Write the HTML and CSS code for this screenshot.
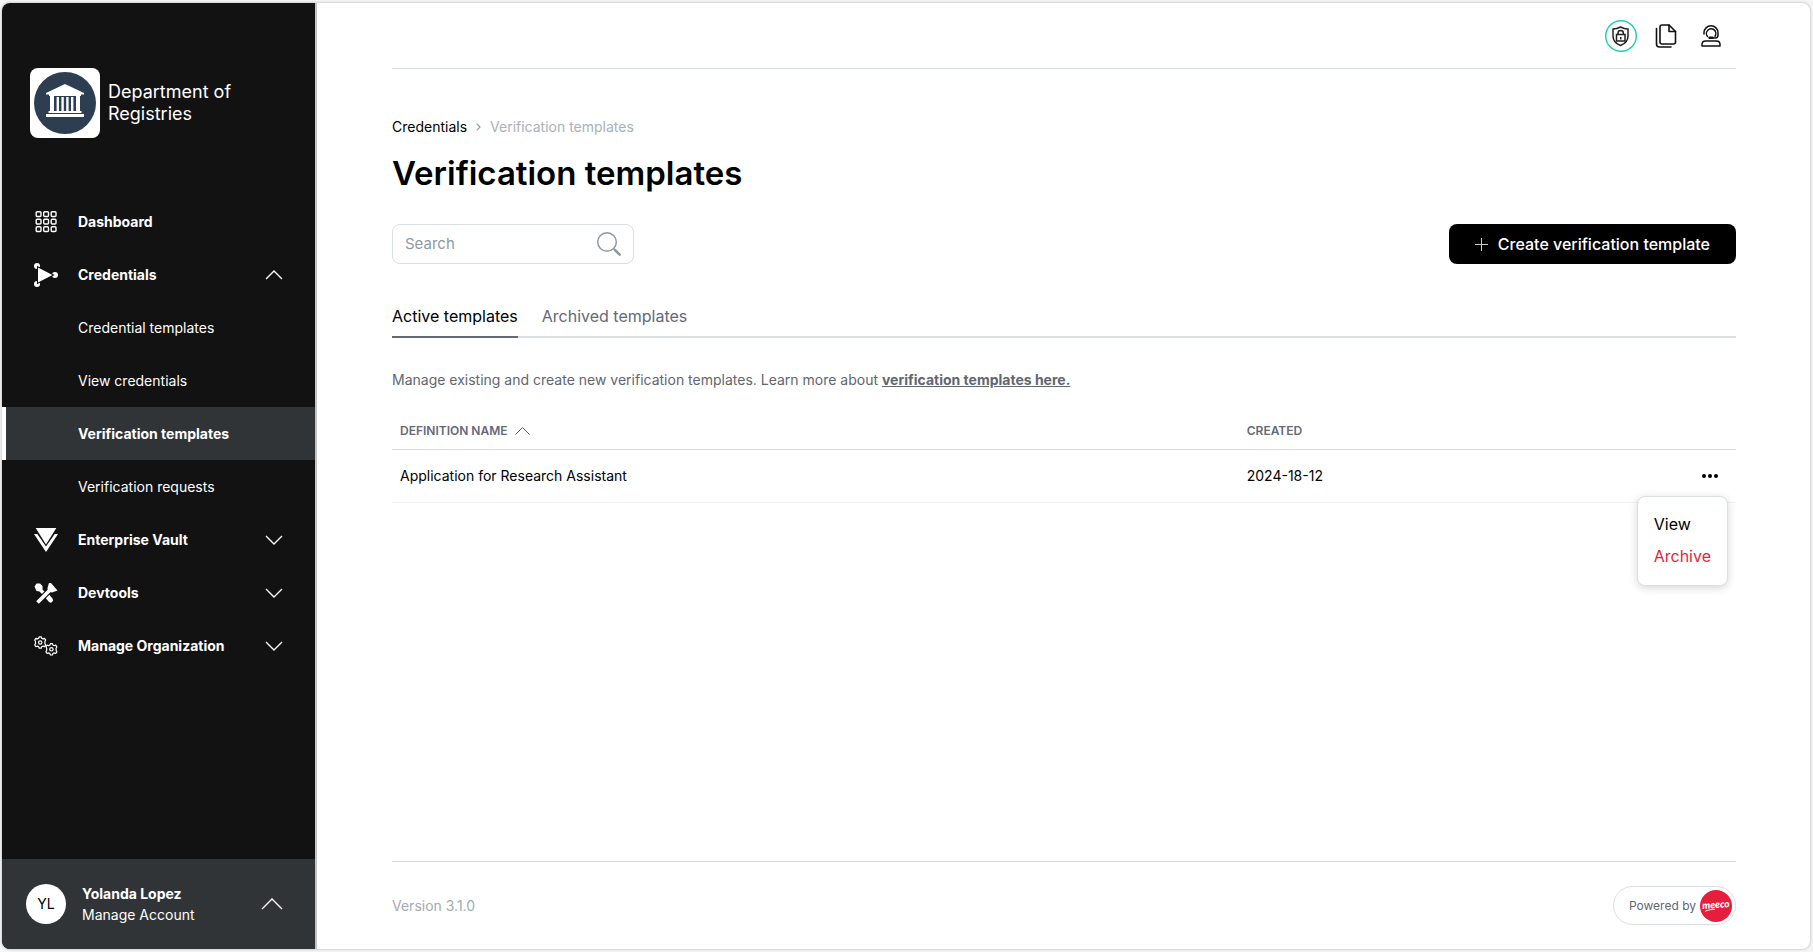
FILE: index.html
```html
<!DOCTYPE html>
<html lang="en">
<head>
<meta charset="utf-8">
<title>Verification templates</title>
<meta name="viewport" content="width=device-width, initial-scale=1">
<link rel="stylesheet" href="styles.css">
</head>
<body>
<div class="app">
  <aside class="sidebar">
    <div class="brand">
      <svg class="brand-logo" viewBox="0 0 70 70" aria-hidden="true">
        <rect width="70" height="70" rx="8" fill="#fff"/>
        <circle cx="35" cy="35" r="31" fill="#2c3e50"/>
        <g fill="#fff">
          <path d="M35 16 54 25v1.500H16V25z"/>
          <path d="M19 26h32v2H19z"/>
          <path d="M20 28h4v16h-4zM26.600 29h2.400v14h-2.400zM31.400 29h2.400v14h-2.400zM36.200 29h2.400v14h-2.400zM41 29h2.400v14H41zM46 28h4v16h-4z"/>
          <path d="M18.500 43h33v2h-33zM16 46h38v3H16z"/>
        </g>
      </svg>
      <span class="brand-name">Department of Registries</span>
    </div>
    <nav class="nav" aria-label="Main">
      <a class="nav-item" href="#">
        <svg class="nav-icon" viewBox="0 0 24 24" fill="none" stroke="#fff" stroke-width="1.4">
          <rect x="2.2" y="1.7" width="4.8" height="4.8" rx="1"/><rect x="9.7" y="1.7" width="4.8" height="4.8" rx="1"/><rect x="17.2" y="1.7" width="4.8" height="4.8" rx="1"/>
          <rect x="2.2" y="9.2" width="4.8" height="4.8" rx="1"/><rect x="9.7" y="9.2" width="4.8" height="4.8" rx="1"/><rect x="17.2" y="9.2" width="4.8" height="4.8" rx="1"/>
          <rect x="2.2" y="16.7" width="4.8" height="4.8" rx="1"/><rect x="9.7" y="16.7" width="4.8" height="4.8" rx="1"/><rect x="17.2" y="16.7" width="4.8" height="4.8" rx="1"/>
        </svg>
        <span>Dashboard</span>
      </a>
      <button class="nav-item" type="button" aria-expanded="true">
        <svg class="nav-icon" viewBox="0 0 24 24">
          <g fill="#fff"><circle cx="3" cy="3" r="3"/><circle cx="3" cy="21" r="3"/><circle cx="21" cy="12" r="3"/></g>
          <path d="M4 4.5v15L18.5 12z" fill="#fff" stroke="#121212" stroke-width="2" paint-order="stroke"/>
        </svg>
        <span>Credentials</span>
        <svg class="nav-chevron" viewBox="0 0 18 10"><path d="M1 9l8-8 8 8"/></svg>
      </button>
      <a class="nav-item nav-sub" href="#">Credential templates</a>
      <a class="nav-item nav-sub" href="#">View credentials</a>
      <a class="nav-item nav-sub nav-current" href="#" aria-current="page">Verification templates</a>
      <a class="nav-item nav-sub" href="#">Verification requests</a>
      <button class="nav-item" type="button" aria-expanded="false">
        <svg class="nav-icon" viewBox="0 0 24 24" fill="#fff"><path d="M1.7 0h20.6L12 16.500z"/><path d="M0 6h3.300L12 18.600 20.700 6H24L12 24z"/></svg>
        <span>Enterprise Vault</span>
        <svg class="nav-chevron" viewBox="0 0 18 10"><path d="M1 1l8 8 8-8"/></svg>
      </button>
      <button class="nav-item" type="button" aria-expanded="false">
        <svg class="nav-icon" viewBox="0 0 24 24">
          <path d="M.5 5.500 2.500 2.500 6 2.500 8.500 5 8.500 8.500 11 11 8.500 13.500 5.500 10.500 2.500 10z" fill="#fff"/>
          <path d="M14 16 16.500 19" stroke="#fff" stroke-width="5" stroke-linecap="round"/>
          <path d="M3.500 21.500 16 9" stroke="#121212" stroke-width="6"/>
          <path d="M3.500 21.500 17 8" stroke="#fff" stroke-width="3.800"/>
          <path d="M15 2 17 2 23.500 9.500 18 11.500 14 10.500 13.500 7z" fill="#fff"/>
        </svg>
        <span>Devtools</span>
        <svg class="nav-chevron" viewBox="0 0 18 10"><path d="M1 1l8 8 8-8"/></svg>
      </button>
      <button class="nav-item" type="button" aria-expanded="false">
        <svg class="nav-icon" viewBox="0 0 24 24" fill="none" stroke="#fff" stroke-width="1.200">
          <g id="gear" stroke-linejoin="round">
            <circle cx="6.200" cy="8.500" r="1.700"/>
            <path d="M5.200 2.800h2l.5 1.500 1.300.6 1.500-.6 1.200 1.700-.8 1.400v2.200l.8 1.400-1.200 1.700-1.500-.6-1.300.6-.5 1.500h-2l-.5-1.500-1.300-.6-1.500.6L.7 11l.8-1.400V7.400L.7 6l1.200-1.700 1.500.6 1.300-.6z"/>
          </g>
          <use href="#gear" x="11.200" y="6.800"/>
        </svg>
        <span>Manage Organization</span>
        <svg class="nav-chevron" viewBox="0 0 18 10"><path d="M1 1l8 8 8-8"/></svg>
      </button>
    </nav>
    <button class="account" type="button">
      <span class="avatar">YL</span>
      <span class="account-text"><strong>Yolanda Lopez</strong><span>Manage Account</span></span>
      <svg class="account-chevron" viewBox="0 0 22 12"><path d="M1 11L11 1l10 10"/></svg>
    </button>
  </aside>

  <main class="main">
    <header class="topbar">
      <button class="icon-button" type="button" aria-label="Security">
        <svg width="32" height="32" viewBox="0 0 32 32" fill="none" stroke="#222" stroke-width="1.500">
          <circle cx="16" cy="16" r="15.300" stroke="#1dd1a8" stroke-width="1.400"/>
          <path d="M15.500 7c2.500 1.400 5 2 7.500 2v7c0 5-3.500 8-7.500 9.500C11.500 24 8 21 8 16V9c2.500 0 5-.6 7.500-2z"/>
          <rect x="11.500" y="14.500" width="8.500" height="6.500"/><path d="M13 14.500v-1.300a2.700 2.700 0 0 1 5.400 0v1.300M15.750 17v2.500"/>
        </svg>
      </button>
      <button class="icon-button" type="button" aria-label="Documents">
        <svg width="22" height="24" viewBox="0 0 22 24" fill="none" stroke="#111" stroke-width="1.600" stroke-linecap="round" stroke-linejoin="round">
          <path d="M7 1h7l6.500 6.500V18a2 2 0 0 1-2 2H7a2 2 0 0 1-2-2V3a2 2 0 0 1 2-2z"/><path d="M14 1v6.500h6.500M1.500 4.500V20a3 3 0 0 0 3 3H16"/>
        </svg>
      </button>
      <button class="icon-button" type="button" aria-label="Support">
        <svg width="20" height="22" viewBox="0 0 20 22" fill="none" stroke="#111" stroke-width="1.500" stroke-linecap="round" stroke-linejoin="round">
          <path d="M3 9V7.800a7 7 0 0 1 14 0V10c0 1.800-1 3-2.800 3H10.500"/><path d="M6.500 11.500A4.700 4.700 0 1 1 14 11.200"/><path d="M8.500 12.800h3" stroke-width="2.400"/>
          <path d="M1 21v-1.500c0-2.200 1.500-3.500 3.500-3.500h11c2 0 3.500 1.300 3.500 3.500V21z"/>
        </svg>
      </button>
    </header>

    <nav class="crumbs" aria-label="Breadcrumb">
      <a href="#">Credentials</a>
      <svg width="5" height="8" viewBox="0 0 5 8" fill="none" stroke="#96a0a9" stroke-width="1.200"><path d="M.7.700 4 4 .7 7.300"/></svg>
      <span>Verification templates</span>
    </nav>
    <h1 class="title">Verification templates</h1>

    <div class="toolbar">
      <label class="search">
        <input type="search" placeholder="Search" aria-label="Search">
        <svg width="26" height="26" viewBox="0 0 26 26" fill="none" stroke="#8f999f" stroke-linecap="round"><circle cx="11" cy="11" r="9.300" stroke-width="1.500"/><path d="M17.700 17.700l1 1" stroke-width="1.500"/><path d="M19 19l4.700 4.700" stroke-width="2.500"/></svg>
      </label>
      <button class="create" type="button">
        <svg width="13" height="13" viewBox="0 0 13 13" stroke="#ccc" stroke-width="1"><path d="M6.500 0v13M0 6.500h13"/></svg>
        Create verification template
      </button>
    </div>

    <div class="tabs" role="tablist">
      <button class="tab tab-active" type="button" role="tab" aria-selected="true">Active templates</button>
      <button class="tab" type="button" role="tab" aria-selected="false">Archived templates</button>
    </div>

    <p class="intro">Manage existing and create new verification templates. Learn more about <a href="#">verification templates here.</a></p>

    <table class="templates">
      <thead>
        <tr>
          <th class="col-name">Definition name <svg width="15" height="8" viewBox="0 0 15 8" fill="none" stroke="#555e66" stroke-width="1"><path d="M.500 7.500l7-7 7 7"/></svg></th>
          <th>Created</th>
          <th class="col-actions" aria-label="Actions"></th>
        </tr>
      </thead>
      <tbody>
        <tr>
          <td>Application for Research Assistant</td>
          <td>2024-18-12</td>
          <td class="col-actions">
            <div class="actions">
              <button class="more" type="button" aria-label="More actions" aria-expanded="true">
                <svg width="16" height="4" viewBox="0 0 16 4"><circle cx="2" cy="2" r="2"/><circle cx="8" cy="2" r="2"/><circle cx="14" cy="2" r="2"/></svg>
              </button>
              <div class="menu" role="menu">
                <button type="button" role="menuitem">View</button>
                <button class="danger" type="button" role="menuitem">Archive</button>
              </div>
            </div>
          </td>
        </tr>
      </tbody>
    </table>

    <footer class="footer">
      <span class="version">Version 3.1.0</span>
      <a class="powered" href="#">Powered by
        <svg width="32" height="32" viewBox="0 0 32 32" role="img" aria-label="Meeco"><circle cx="16" cy="16" r="16" fill="#e61e3d"/><text class="meeco" x="16" y="18" text-anchor="middle" transform="rotate(-4 16 16)">meeco</text><path d="M5 21.500c3-2 7-2 10-2.200" fill="none" stroke="#fff" stroke-width="1"/></svg>
      </a>
    </footer>
  </main>
</div>
</body>
</html>
```
FILE: styles.css
```css
* { box-sizing: border-box; }

body {
  margin: 0;
  padding: 3px 3px 3px 2px;
  background: #f5f5f5;
  color: #000;
  font: 14px/20px Inter, "Open Sans", sans-serif;
}

button, input { font: inherit; color: inherit; }
button { border: 0; padding: 0; background: none; cursor: pointer; }
a { color: inherit; text-decoration: none; }
svg { display: block; flex: none; }

.app {
  display: flex;
  min-height: calc(100vh - 6px);
  overflow: hidden;
  border-radius: 8px;
  background: #fff;
  box-shadow: 0 0 3px rgba(0, 0, 0, 0.3);
}

/* Sidebar */
.sidebar {
  display: flex;
  flex-direction: column;
  flex: none;
  width: 315px;
  border-right: 2px solid #c4c4c4;
  background: #121212;
  color: #fff;
}
.brand {
  display: flex;
  align-items: center;
  gap: 8px;
  padding: 65px 28px 57px;
}
.brand-logo { width: 70px; height: 70px; }
.brand-name { max-width: 140px; font-size: 18px; line-height: 22px; }
.nav { display: flex; flex-direction: column; }
.nav-item {
  display: flex;
  align-items: center;
  gap: 20px;
  height: 53px;
  padding: 0 32px;
  font-weight: 700;
  text-align: left;
}
.nav-icon { width: 24px; height: 24px; }
.nav-chevron { width: 18px; height: 10px; margin-left: auto; }
.nav-chevron path, .account-chevron path { fill: none; stroke: #fff; stroke-width: 1.4; }
.nav-sub { padding-left: 76px; font-weight: 400; }
.nav-current {
  padding-left: 72px;
  border-left: 4px solid #fff;
  background: #313437;
  font-weight: 700;
}
.account {
  display: flex;
  align-items: center;
  gap: 16px;
  height: 90px;
  margin-top: auto;
  padding: 0 32px 0 24px;
  background: #313437;
  text-align: left;
}
.avatar {
  display: grid;
  place-items: center;
  width: 40px;
  height: 40px;
  border-radius: 50%;
  background: #fff;
  color: #000;
}
.account-text { display: grid; line-height: 21px; }
.account-chevron { width: 22px; height: 12px; margin-left: auto; }

/* Main column */
.main {
  display: flex;
  flex-direction: column;
  flex: 1;
  min-width: 0;
  padding: 0 74px 0 75px;
}
.topbar {
  display: flex;
  align-items: center;
  justify-content: flex-end;
  gap: 18px;
  height: 66px;
  padding-right: 15px;
  border-bottom: 1px solid #d9dfe2;
}
.icon-button + .icon-button + .icon-button { margin-left: 6px; }
.crumbs {
  display: flex;
  align-items: center;
  gap: 9px;
  margin-top: 48px;
}
.crumbs span { color: #a7b1b9; }
.title {
  margin: 16px 0 31px;
  font-size: 33px;
  line-height: 40px;
  font-weight: 600;
}
.toolbar { display: flex; justify-content: space-between; }
.search {
  display: flex;
  align-items: center;
  width: 242px;
  height: 40px;
  padding: 0 11px 0 12px;
  border: 1px solid #dadfe1;
  border-radius: 8px;
}
.search input {
  flex: 1;
  min-width: 0;
  padding: 0;
  border: 0;
  outline: 0;
  background: none;
  font-size: 15px;
}
.search input::placeholder { color: #8f999f; opacity: 1; }
.create {
  display: flex;
  align-items: center;
  gap: 10px;
  height: 40px;
  padding: 0 26px;
  border-radius: 8px;
  background: #000;
  color: #fff;
  font-size: 16px;
  font-weight: 500;
}
.tabs {
  display: flex;
  gap: 24px;
  margin-top: 42px;
  border-bottom: 2px solid #dadfe3;
}
.tab {
  margin-bottom: -2px;
  padding-bottom: 10px;
  border-bottom: 2px solid transparent;
  color: #646877;
  font-size: 16px;
}
.tab-active { border-color: #646877; color: #000; }
.intro { margin: 32px 0 0; color: #5f6670; }
.intro a { font-weight: 700; text-decoration: underline; }

.templates {
  width: 100%;
  margin-top: 24px;
  border-collapse: collapse;
  table-layout: fixed;
}
.templates th {
  height: 35px;
  padding: 0 8px;
  border-bottom: 1px solid #d5dcde;
  color: #646877;
  font-size: 12px;
  font-weight: 600;
  text-align: left;
  text-transform: uppercase;
}
.templates th svg { display: inline-block; margin-left: 4px; }
.templates td {
  height: 53px;
  padding: 0 8px;
  border-bottom: 1px solid #f0f1f2;
}
.templates .col-name { width: 63%; }
.templates .col-actions { width: 110px; padding-right: 18px; }
.actions { position: relative; display: flex; justify-content: flex-end; }
.more { display: grid; place-items: center; height: 20px; }
.menu {
  position: absolute;
  top: 30px;
  right: -10px;
  display: flex;
  flex-direction: column;
  align-items: flex-start;
  gap: 12px;
  padding: 17px 16px 19px;
  border: 1px solid #dadfe1;
  border-radius: 8px;
  background: #fff;
  box-shadow: 0 2px 8px rgba(0, 0, 0, 0.16);
  font-size: 16px;
}
.danger { color: #e61e3d; }

.footer {
  display: flex;
  align-items: center;
  justify-content: space-between;
  height: 88px;
  margin-top: auto;
  border-top: 1px solid #d9dfe2;
}
.version { color: #a3abb1; }
.powered {
  display: flex;
  align-items: center;
  gap: 4px;
  height: 39px;
  padding: 0 3px 0 15px;
  border: 1px solid #dadfe3;
  border-radius: 20px;
  color: #5f6670;
  font-size: 12px;
}
.meeco { fill: #fff; font: italic 900 10px Lato, sans-serif; }
```
